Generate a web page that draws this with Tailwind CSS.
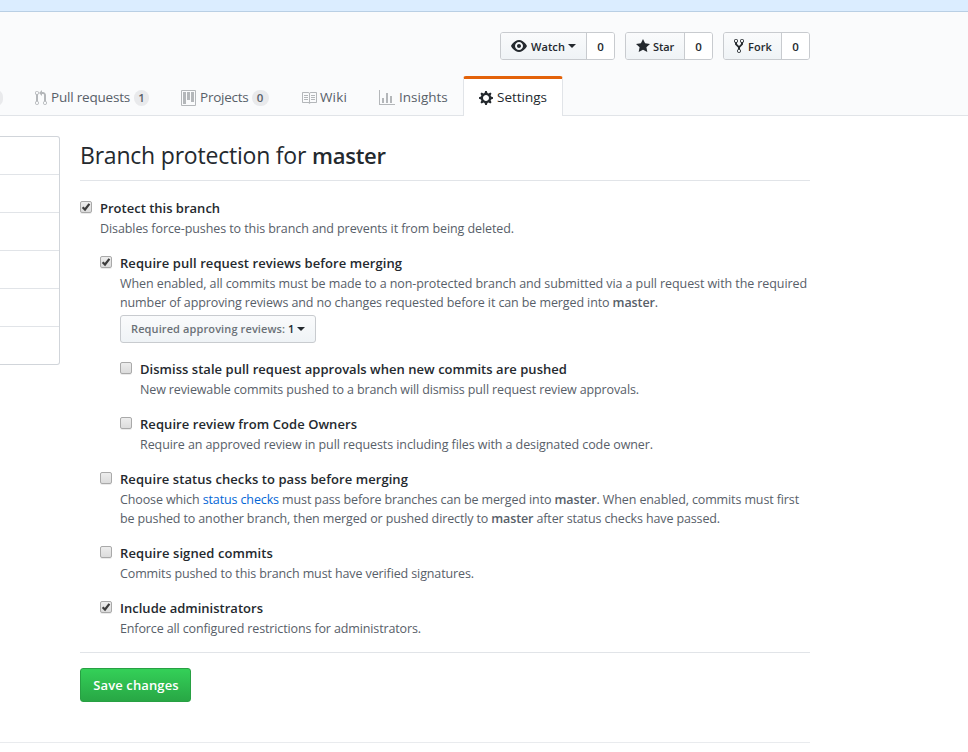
<!DOCTYPE html>
<html lang="en">
<head>
<meta charset="utf-8">
<title>Branch protection</title>
<script src="https://cdn.jsdelivr.net/npm/@tailwindcss/browser@4"></script>
</head>
<body class="h-[752px] overflow-hidden bg-white font-['Open_Sans','Noto_Sans',sans-serif] text-[13.5px] text-[#24292e]">
<svg class="hidden"><symbol id="check" viewBox="0 0 12 12"><path d="M2.6 6.2L5 8.5 9.4 2.8" fill="none" stroke="#3c3c3c" stroke-width="2.2"/></symbol></svg>
<div class="h-3 border-b border-[#b9cfe4] bg-[#dbedff]"></div>
<header class="h-[104px] border-b border-[#e1e4e8] bg-[#fafbfc] pt-5">
  <div class="flex w-[810px] justify-end gap-[10px] text-[11px] font-semibold leading-[18px]">
    <div class="flex h-7 w-[115px] overflow-hidden rounded-[3px] border border-[#c8cbcf]">
      <div class="flex w-[86px] items-center border-r border-[#c8cbcf] bg-linear-to-b from-[#fafbfc] to-[#eff3f6] pl-[10px]">
        <svg class="mr-1 h-4 w-4 shrink-0" viewBox="0 0 16 16" fill="currentColor"><path fill-rule="evenodd" d="M8.06 2C3 2 0 8 0 8s3 6 8.06 6C13 14 16 8 16 8s-3-6-7.94-6zM8 12c-2.2 0-4-1.78-4-4 0-2.2 1.8-4 4-4 2.22 0 4 1.8 4 4 0 2.22-1.78 4-4 4zm2-4c0 1.11-.89 2-2 2-1.11 0-2-.89-2-2 0-1.11.89-2 2-2 1.11 0 2 .89 2 2z"/></svg>
        <span class="pt-px tracking-[0.08px]">Watch</span>
        <svg class="ml-[3px] h-1 w-2 shrink-0" viewBox="0 0 8 4" fill="currentColor"><path d="M0 0h8L4 4z"/></svg>
      </div>
      <div class="flex-1 bg-white pt-[5px] text-center text-[11.5px]">0</div>
    </div>
    <div class="flex h-7 w-[88px] overflow-hidden rounded-[3px] border border-[#c8cbcf]">
      <div class="flex w-[59px] items-center border-r border-[#c8cbcf] bg-linear-to-b from-[#fafbfc] to-[#eff3f6] pl-[10px]">
        <svg class="mr-[3px] h-4 w-[14px] shrink-0" viewBox="0 0 14 16" fill="currentColor"><path d="M14 6l-4.9-.64L7 1 4.9 5.36 0 6l3.6 3.26L2.67 14 7 11.67 11.33 14l-.93-4.74z"/></svg>
        <span class="pt-px tracking-[-0.1px]">Star</span>
      </div>
      <div class="flex-1 bg-white pt-[5px] text-center text-[11.5px]">0</div>
    </div>
    <div class="flex h-7 w-[87px] overflow-hidden rounded-[3px] border border-[#c8cbcf]">
      <div class="flex w-[58px] items-center border-r border-[#c8cbcf] bg-linear-to-b from-[#fafbfc] to-[#eff3f6] pl-[10px]">
        <svg class="mr-1 h-4 w-[10px] shrink-0" viewBox="0 0 10 16" fill="currentColor"><path fill-rule="evenodd" d="M8 1a1.993 1.993 0 0 0-1 3.72V6L5 8 3 6V4.72A1.993 1.993 0 0 0 2 1a1.993 1.993 0 0 0-1 3.72V6.5l3 3v1.78A1.993 1.993 0 0 0 5 15a1.993 1.993 0 0 0 1-3.72V9.5l3-3V4.72A1.993 1.993 0 0 0 8 1zM2 4.2C1.34 4.2.8 3.65.8 3c0-.65.55-1.2 1.2-1.2.65 0 1.2.55 1.2 1.2 0 .65-.55 1.2-1.2 1.2zm3 10c-.66 0-1.2-.55-1.2-1.2 0-.65.55-1.2 1.2-1.2.65 0 1.2.55 1.2 1.2 0 .65-.55 1.2-1.2 1.2zm3-10c-.66 0-1.2-.55-1.2-1.2 0-.65.55-1.2 1.2-1.2.65 0 1.2.55 1.2 1.2 0 .65-.55 1.2-1.2 1.2z"/></svg>
        <span class="pt-px tracking-[0.1px]">Fork</span>
      </div>
      <div class="flex-1 bg-white pt-[5px] text-center text-[11.5px]">0</div>
    </div>
  </div>
  <nav class="mt-4 flex h-10 text-[#586069]">
    <div class="flex w-[19px] items-center pt-[3px]"><span class="-ml-[10px] h-4 w-[13px] rounded-full bg-[#e9eaec]"></span></div>
    <a class="flex w-[146px] items-center pt-[3px] pl-4">
      <svg class="mr-1 h-4 w-3 shrink-0" viewBox="0 0 12 16" fill="#b4b7ba"><path fill-rule="evenodd" d="M11 11.28V5c-.03-.78-.34-1.47-.94-2.06C9.46 2.35 8.78 2.03 8 2H7V0L4 3l3 3V4h1c.27.02.48.11.69.31.21.2.3.42.31.69v6.28A1.993 1.993 0 0 0 10 15a1.993 1.993 0 0 0 1-3.72zm-1 2.92c-.66 0-1.2-.55-1.2-1.2 0-.65.55-1.2 1.2-1.2.65 0 1.2.55 1.2 1.2 0 .65-.55 1.2-1.2 1.2zM4 3c0-1.11-.89-2-2-2a1.993 1.993 0 0 0-1 3.72v6.56A1.993 1.993 0 0 0 2 15a1.993 1.993 0 0 0 1-3.72V4.72c.59-.34 1-.98 1-1.72zm-.8 10c0 .66-.55 1.2-1.2 1.2-.65 0-1.2-.55-1.2-1.2 0-.65.55-1.2 1.2-1.2.65 0 1.2.55 1.2 1.2zM2 4.2C1.34 4.2.8 3.65.8 3c0-.65.55-1.2 1.2-1.2.65 0 1.2.55 1.2 1.2 0 .65-.55 1.2-1.2 1.2z"/></svg>
      <span class="tracking-[-0.2px]">Pull requests</span>
      <span class="ml-1 h-4 w-[15px] rounded-full bg-[#e9eaec] text-center text-[11.5px] font-semibold leading-4">1</span>
    </a>
    <a class="flex w-[120px] items-center pt-[3px] pl-4">
      <svg class="mr-1 h-4 w-[15px] shrink-0" viewBox="0 0 15 16" fill="#b4b7ba"><path fill-rule="evenodd" d="M10 12h3V2h-3v10zm-4-2h3V2H6v8zm-4 4h3V2H2v12zm-1 1h13V1H1v14zM14 0H1a1 1 0 0 0-1 1v14a1 1 0 0 0 1 1h13a1 1 0 0 0 1-1V1a1 1 0 0 0-1-1z"/></svg>
      <span class="tracking-[-0.24px]">Projects</span>
      <span class="ml-[3px] h-4 w-[17px] rounded-full bg-[#e9eaec] text-center text-[11.5px] font-semibold leading-4">0</span>
    </a>
    <a class="flex w-[78px] items-center pt-[3px] pl-4">
      <svg class="mr-[3px] h-4 w-4 shrink-0" viewBox="0 0 16 16" fill="#b4b7ba"><path fill-rule="evenodd" d="M3 5h4v1H3V5zm0 3h4V7H3v1zm0 2h4V9H3v1zm11-5h-4v1h4V5zm0 2h-4v1h4V7zm0 2h-4v1h4V9zm2-6v9c0 .55-.45 1-1 1H9.5l-1 1-1-1H2c-.55 0-1-.45-1-1V3c0-.55.45-1 1-1h5.5l1 1 1-1H15c.55 0 1 .45 1 1zm-8 .5L7.5 3H2v9h6V3.5zm7-.5H9.5l-.5.5V12h6V3z"/></svg>
      <span class="tracking-[0.15px]">Wiki</span>
    </a>
    <a class="flex w-[100px] items-center pt-[3px] pl-4">
      <svg class="mr-1 h-4 w-4 shrink-0" viewBox="0 0 16 16" fill="#b4b7ba"><path d="M16 14v1H0V0h1v14h15zM5 13H3V8h2v5zm4 0H7V3h2v10zm4 0h-2V6h2v7z"/></svg>
      <span>Insights</span>
    </a>
    <a class="flex w-[100px] items-center rounded-t-[3px] border-x border-t-[3px] border-x-[#e1e4e8] border-t-[#e36209] bg-white pl-[15px] text-[#24292e]">
      <svg class="mr-1 h-4 w-[14px] shrink-0" viewBox="0 0 14 16" fill="currentColor"><path fill-rule="evenodd" d="M14 8.77v-1.6l-1.94-.64-.45-1.09.88-1.84-1.13-1.13-1.81.91-1.09-.45-.69-1.92h-1.6l-.63 1.94-1.11.45-1.84-.88-1.13 1.13.91 1.81-.45 1.09L0 7.23v1.59l1.94.64.45 1.09-.88 1.84 1.13 1.13 1.81-.91 1.09.45.69 1.92h1.59l.63-1.94 1.11-.45 1.84.88 1.13-1.13-.92-1.81.47-1.09L14 8.75v.02zM7 11c-1.66 0-3-1.34-3-3s1.34-3 3-3 3 1.34 3 3-1.34 3-3 3z"/></svg>
      <span>Settings</span>
    </a>
  </nav>
</header>
<div class="flex w-[810px] pt-5">
  <aside class="mr-5 h-[229px] w-[60px] divide-y divide-[#e1e4e8] rounded-r-[3px] border-y border-r border-[#d1d5da]">
    <div class="h-[38px]"></div><div class="h-[38px]"></div><div class="h-[38px]"></div><div class="h-[38px]"></div><div class="h-[38px]"></div><div class="h-[37px]"></div>
  </aside>
  <main class="w-[730px] whitespace-nowrap">
    <h2 class="h-[45px] border-b border-[#e1e4e8] text-[23px] leading-[39px] tracking-[-0.21px]">Branch protection for <b class="text-[22px] font-semibold tracking-[-0.25px]">master</b></h2>
    <section class="mt-[17px] flex">
      <div class="relative mt-[3px] h-3 w-3 shrink-0"><input type="checkbox" checked class="block h-3 w-3 appearance-none rounded-[2px] border border-[#a9a9a9] bg-linear-to-b from-[#ededed] to-[#dcdcdc] shadow-[0_1px_0_rgba(0,0,0,0.08)]"><svg class="absolute inset-0 h-3 w-3"><use href="#check"/></svg></div>
      <div class="ml-2">
        <div class="text-[13px] font-semibold leading-[21px]"><span class="tracking-[0px]">Protect this branch</span></div>
        <p class="text-[12.5px] leading-[19px] text-[#586069]"><span class="tracking-[-0.088px]">Disables force-pushes to this branch and prevents it from being deleted.</span></p>
      </div>
    </section>
    <section class="mt-[15px] ml-5 flex">
      <div class="relative mt-[3px] h-3 w-3 shrink-0"><input type="checkbox" checked class="block h-3 w-3 appearance-none rounded-[2px] border border-[#a9a9a9] bg-linear-to-b from-[#ededed] to-[#dcdcdc] shadow-[0_1px_0_rgba(0,0,0,0.08)]"><svg class="absolute inset-0 h-3 w-3"><use href="#check"/></svg></div>
      <div class="ml-2">
        <div class="text-[13px] font-semibold leading-[21px]"><span class="tracking-[0.07px]">Require pull request reviews before merging</span></div>
        <p class="text-[12.5px] leading-[19px] text-[#586069]"><span class="tracking-[-0.084px]">When enabled, all commits must be made to a non-protected branch and submitted via a pull request with the required</span><br><span class="tracking-[-0.104px]">number of approving reviews and no changes requested before it can be merged into <b class="font-semibold">master</b>.</span></p>
        <button class="mt-[3px] flex h-7 w-[196px] items-center rounded-[3px] border border-[#c8cbcf] bg-linear-to-b from-[#fafbfc] to-[#eff3f6] pl-[10px] text-[11px] font-semibold"><span class="pt-px tracking-[0.11px]"><span class="text-[#6b7177]">Required approving reviews:</span> 1</span><svg class="ml-[2px] h-1 w-2 shrink-0" viewBox="0 0 8 4" fill="currentColor"><path d="M0 0h8L4 4z"/></svg></button>
      </div>
    </section>
    <section class="mt-4 ml-10 flex">
      <input type="checkbox" class="mt-[3px] h-3 w-3 shrink-0 appearance-none rounded-[2px] border border-[#a9a9a9] bg-linear-to-b from-[#ededed] to-[#dcdcdc] shadow-[0_1px_0_rgba(0,0,0,0.08)]">
      <div class="ml-2">
        <div class="text-[13px] font-semibold leading-[21px]"><span class="tracking-[0.033px]">Dismiss stale pull request approvals when new commits are pushed</span></div>
        <p class="text-[12.5px] leading-[19px] text-[#586069]"><span class="tracking-[-0.125px]">New reviewable commits pushed to a branch will dismiss pull request review approvals.</span></p>
      </div>
    </section>
    <section class="mt-[15px] ml-10 flex">
      <input type="checkbox" class="mt-[3px] h-3 w-3 shrink-0 appearance-none rounded-[2px] border border-[#a9a9a9] bg-linear-to-b from-[#ededed] to-[#dcdcdc] shadow-[0_1px_0_rgba(0,0,0,0.08)]">
      <div class="ml-2">
        <div class="text-[13px] font-semibold leading-[21px]"><span class="tracking-[0.064px]">Require review from Code Owners</span></div>
        <p class="text-[12.5px] leading-[19px] text-[#586069]"><span class="tracking-[-0.084px]">Require an approved review in pull requests including files with a designated code owner.</span></p>
      </div>
    </section>
    <section class="mt-[15px] ml-5 flex">
      <input type="checkbox" class="mt-[3px] h-3 w-3 shrink-0 appearance-none rounded-[2px] border border-[#a9a9a9] bg-linear-to-b from-[#ededed] to-[#dcdcdc] shadow-[0_1px_0_rgba(0,0,0,0.08)]">
      <div class="ml-2">
        <div class="text-[13px] font-semibold leading-[21px]"><span class="tracking-[0.072px]">Require status checks to pass before merging</span></div>
        <p class="text-[12.5px] leading-[19px] text-[#586069]"><span class="tracking-[-0.121px]">Choose which <a class="text-[#0366d6]">status checks</a> must pass before branches can be merged into <b class="font-semibold">master</b>. When enabled, commits must first</span><br><span class="tracking-[-0.131px]">be pushed to another branch, then merged or pushed directly to <b class="font-semibold">master</b> after status checks have passed.</span></p>
      </div>
    </section>
    <section class="mt-[15px] ml-5 flex">
      <input type="checkbox" class="mt-[3px] h-3 w-3 shrink-0 appearance-none rounded-[2px] border border-[#a9a9a9] bg-linear-to-b from-[#ededed] to-[#dcdcdc] shadow-[0_1px_0_rgba(0,0,0,0.08)]">
      <div class="ml-2">
        <div class="text-[13px] font-semibold leading-[21px]"><span class="tracking-[0.09px]">Require signed commits</span></div>
        <p class="text-[12.5px] leading-[19px] text-[#586069]"><span class="tracking-[-0.117px]">Commits pushed to this branch must have verified signatures.</span></p>
      </div>
    </section>
    <section class="mt-[15px] ml-5 flex">
      <div class="relative mt-[3px] h-3 w-3 shrink-0"><input type="checkbox" checked class="block h-3 w-3 appearance-none rounded-[2px] border border-[#a9a9a9] bg-linear-to-b from-[#ededed] to-[#dcdcdc] shadow-[0_1px_0_rgba(0,0,0,0.08)]"><svg class="absolute inset-0 h-3 w-3"><use href="#check"/></svg></div>
      <div class="ml-2">
        <div class="text-[13px] font-semibold leading-[21px]"><span class="tracking-[0.013px]">Include administrators</span></div>
        <p class="text-[12.5px] leading-[19px] text-[#586069]"><span class="tracking-[-0.128px]">Enforce all configured restrictions for administrators.</span></p>
      </div>
    </section>
    <hr class="mt-[14px] border-[#e1e4e8]">
    <button class="mt-[15px] h-[34px] w-[111px] rounded-[3px] border border-[#28a043] bg-linear-to-b from-[#34d058] to-[#28a745] pt-px pl-px text-[13px] font-semibold tracking-[0.13px] text-white">Save changes</button>
  </main>
</div>
<hr class="mt-10 w-[810px] border-[#e9ebee]">
</body>
</html>
